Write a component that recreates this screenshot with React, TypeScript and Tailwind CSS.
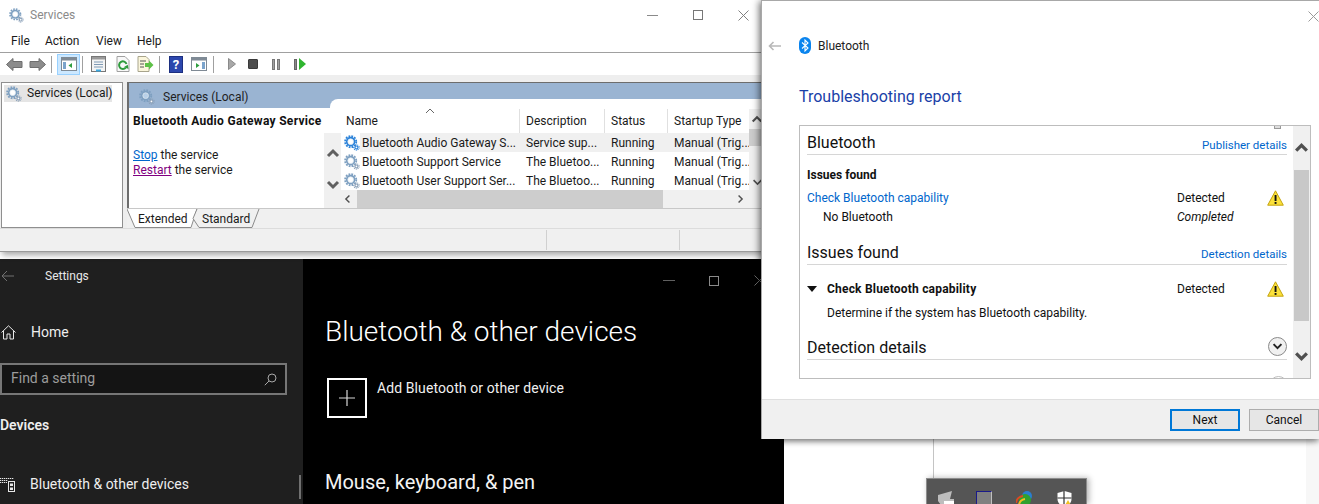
import React from "react";

function Gear({ size = 18, ring = "#7d9fc0", small = "#8aa0b8", hub = "#ffffff" }: { size?: number; ring?: string; small?: string; hub?: string }) {
  return (
    <svg width={size} height={size} viewBox="0 0 18 18" className="shrink-0">
      <circle cx="7.5" cy="7.5" r="5.4" fill={ring} />
      <circle cx="7.5" cy="7.5" r="6.3" fill="none" stroke={ring} strokeWidth="2" strokeDasharray="2 1.3" />
      <circle cx="7.5" cy="7.5" r="3.2" fill={hub} />
      <circle cx="7.5" cy="7.5" r="3.2" fill="none" stroke="#dfe8f0" strokeWidth="0.8" />
      <circle cx="14" cy="14" r="2.2" fill={small} />
      <circle cx="14" cy="14" r="3" fill="none" stroke={small} strokeWidth="1.2" strokeDasharray="1.2 0.9" />
      <circle cx="14" cy="14" r="1" fill="#fff" />
    </svg>
  );
}

function Chev({ dir, size = 14, color = "#606060", sw = 3 }: { dir: "up" | "down" | "left" | "right"; size?: number; color?: string; sw?: number }) {
  const d = { up: "M2 10 L7 5 L12 10", down: "M2 4 L7 9 L12 4", left: "M9 2 L4 7 L9 12", right: "M5 2 L10 7 L5 12" }[dir];
  return (
    <svg width={size} height={size} viewBox="0 0 14 14" className="shrink-0">
      <path d={d} fill="none" stroke={color} strokeWidth={sw} />
    </svg>
  );
}

function Warn() {
  return (
    <svg width="17" height="16" viewBox="0 0 17 16" className="shrink-0">
      <path d="M8.5 0.8 L16.3 15.2 L0.7 15.2 Z" fill="#fbe13a" stroke="#c4a30e" strokeWidth="1" strokeLinejoin="round" />
      <rect x="7.6" y="5" width="1.9" height="6" fill="#111" />
      <rect x="7.6" y="12" width="1.9" height="1.9" fill="#111" />
    </svg>
  );
}

function Sep({ ml }: { ml: string }) {
  return <div className={`w-px h-[17px] bg-[#a0a0a0] shrink-0 ${ml}`} />;
}

function ServicesToolbar() {
  return (
    <div className="h-[22px] flex items-center bg-white shrink-0">
      <svg width="17" height="15" viewBox="0 0 17 14" className="ml-[6px] shrink-0">
        <path d="M0.5 7 L7 1 V4 H16 V10 H7 V13 Z" fill="#8c8c8c" stroke="#6e6e6e" />
      </svg>
      <svg width="17" height="15" viewBox="0 0 17 14" className="ml-[6px] shrink-0">
        <path d="M16.5 7 L10 1 V4 H1 V10 H10 V13 Z" fill="#8c8c8c" stroke="#6e6e6e" />
      </svg>
      <Sep ml="ml-[5px]" />
      <div className="ml-[5px] w-[23px] h-[21px] bg-[#cce8ff] border border-[#99d1ff] flex items-center justify-center shrink-0">
        <svg width="16" height="14" viewBox="0 0 16 14">
          <rect x="0.5" y="0.5" width="15" height="13" fill="#fff" stroke="#7f8a95" />
          <rect x="0.5" y="0.5" width="15" height="3" fill="#7f8a95" />
          <rect x="2" y="5" width="3" height="7" fill="#7ba4cc" />
          <path d="M11 6 L7.5 8.5 L11 11 Z" fill="#2f9e3f" />
        </svg>
      </div>
      <Sep ml="ml-[2px]" />
      <svg width="15" height="16" viewBox="0 0 15 16" className="ml-[8px] shrink-0">
        <rect x="0.5" y="0.5" width="14" height="15" fill="#f4f4f4" stroke="#777" />
        <rect x="1" y="1" width="13" height="2.5" fill="#9a9a9a" />
        <path d="M3 6 H12 M3 8.5 H12 M3 11 H12" stroke="#7f9ab5" />
        <rect x="5" y="13.5" width="5" height="2" fill="#39a7e0" />
      </svg>
      <svg width="14" height="16" viewBox="0 0 14 16" className="ml-[10px] shrink-0">
        <path d="M1 0.5 H9 L13 4.5 V15.5 H1 Z" fill="#f8f8f8" stroke="#a0a0a0" />
        <path d="M10.5 8 A3.8 3.8 0 1 0 9.8 11.6" fill="none" stroke="#2e9b3c" strokeWidth="2" />
        <path d="M8 11 L12.5 13 L11.8 8.8 Z" fill="#2e9b3c" />
      </svg>
      <svg width="17" height="16" viewBox="0 0 17 16" className="ml-[7px] shrink-0">
        <path d="M1 0.5 H9 L12 3.5 V15.5 H1 Z" fill="#fbf6dc" stroke="#a8a48c" />
        <path d="M3 5 H9 M3 8 H7 M3 11 H7" stroke="#555" />
        <path d="M8 7 H12 V4.5 L16.5 9 L12 13.5 V11 H8 Z" fill="#5ec048" />
      </svg>
      <Sep ml="ml-[5px]" />
      <div className="ml-[9px] w-[14px] h-[17px] bg-[#2c47ad] border border-[#1c2f80] flex items-center justify-center text-white text-[13px] font-bold shrink-0 leading-none">?</div>
      <svg width="16" height="14" viewBox="0 0 16 14" className="ml-[8px] shrink-0">
        <rect x="0.5" y="0.5" width="15" height="13" fill="#fff" stroke="#7f8a95" />
        <rect x="0.5" y="0.5" width="15" height="3" fill="#7f8a95" />
        <path d="M5 6 L8.5 8.5 L5 11 Z" fill="#2f9e3f" />
        <rect x="11" y="5" width="3" height="7" fill="#7ba4cc" />
      </svg>
      <Sep ml="ml-[6px]" />
      <svg width="8" height="12" viewBox="0 0 8 12" className="ml-[14px] shrink-0">
        <path d="M0.5 0.5 L7.5 6 L0.5 11.5 Z" fill="#a8a8a8" stroke="#8a8a8a" />
      </svg>
      <div className="ml-[12px] w-[10px] h-[10px] rounded-[1px] bg-[#4d4d4d] border border-[#3a3a3a] shrink-0" />
      <div className="ml-[14px] flex gap-[2px] shrink-0">
        <div className="w-[3px] h-[11px] bg-[#a0a0a0] border-[0.5px] border-[#777]" />
        <div className="w-[3px] h-[11px] bg-[#a0a0a0] border-[0.5px] border-[#777]" />
      </div>
      <div className="ml-[14px] flex items-center gap-[2px] shrink-0">
        <div className="w-[3px] h-[11px] bg-[#8a8a8a] border-[0.5px] border-[#666]" />
        <svg width="7" height="12" viewBox="0 0 7 12">
          <path d="M0 0 L7 6 L0 12 Z" fill="#2fb52f" />
        </svg>
      </div>
    </div>
  );
}

const rows = [
  ["Bluetooth Audio Gateway S...", "Service sup...", "Running", "Manual (Trig..."],
  ["Bluetooth Support Service", "The Bluetoo...", "Running", "Manual (Trig..."],
  ["Bluetooth User Support Ser...", "The Bluetoo...", "Running", "Manual (Trig..."],
];

function ServicesList() {
  return (
    <div className="flex-1 flex flex-col min-w-0 relative">
      <div className="absolute left-[6px] right-0 top-0 bottom-0 bg-white rounded-tl-[8px]" />
      <div className="relative h-[34px] pt-[10px] pl-[6px] grid grid-cols-[190px_85px_63px_1fr] shrink-0">
        <div className="pl-[16px] flex items-center border-r border-[#e0e0e0]">Name</div>
        <div className="pl-[6px] flex items-center border-r border-[#e0e0e0]">Description</div>
        <div className="pl-[6px] flex items-center border-r border-[#e0e0e0]">Status</div>
        <div className="pl-[6px] flex items-center whitespace-nowrap">Startup Type</div>
        <svg width="10" height="6" viewBox="0 0 10 6" className="absolute left-[101px] top-[9px]">
          <path d="M1 5 L5 1 L9 5" fill="none" stroke="#666" />
        </svg>
      </div>
      <div className="relative h-[57px] flex shrink-0">
        <div className="w-[17px] shrink-0 bg-[#f0f0f0] flex flex-col items-center pt-[13px]">
          <Chev dir="up" />
          <div className="mt-[18px]"><Chev dir="down" /></div>
        </div>
        <div className="flex-1 min-w-0 mr-[16px] pl-[3px]">
          {rows.map((r, i) => {
            const sel = i === 0 ? "bg-[#f0f0f0]" : "";
            return (
              <div key={r[0]} className="h-[19px] grid grid-cols-[176px_85px_63px_1fr] items-center whitespace-nowrap">
                <div className="flex items-center h-full">
                  <Gear size={16} ring={i === 0 ? "#2b82d9" : "#7d9fc0"} small={i === 0 ? "#2b82d9" : "#8aa0b8"} />
                  <span className={`pl-[2px] h-full flex items-center flex-1 ${sel}`}>{r[0]}</span>
                </div>
                <span className={`pl-[6px] h-full flex items-center ${sel}`}>{r[1]}</span>
                <span className={`pl-[6px] h-full flex items-center ${sel}`}>{r[2]}</span>
                <span className={`pl-[6px] h-full flex items-center ${sel}`}>{r[3]}</span>
              </div>
            );
          })}
        </div>
      </div>
      <div className="relative h-[18px] bg-[#f0f0f0] flex items-center shrink-0">
        <div className="w-[33px] pl-[19px] flex shrink-0"><Chev dir="left" size={10} color="#505050" sw={2} /></div>
        <div className="w-[306px] h-full bg-[#cdcdcd] shrink-0" />
        <div className="ml-auto w-[30px] flex shrink-0"><Chev dir="right" size={10} color="#505050" sw={2} /></div>
      </div>
      <div className="absolute right-0 top-[10px] bottom-[18px] w-[16px] bg-[#f0f0f0]">
        <div className="absolute top-[4px] left-0 w-full flex justify-center"><Chev dir="up" size={12} color="#505050" sw={2.5} /></div>
        <div className="absolute top-[20px] left-0 w-full h-[17px] bg-[#cdcdcd]" />
        <div className="absolute bottom-[2px] left-0 w-full flex justify-center"><Chev dir="down" size={11} color="#505050" sw={2} /></div>
      </div>
    </div>
  );
}

function ServicesWindow() {
  return (
    <div className="absolute left-0 top-0 w-[768px] h-[252px] bg-white border-r border-b border-[#9a9a9a] shadow-[2px_3px_6px_rgba(0,0,0,0.35)] flex flex-col text-[12px] text-[#1a1a1a] z-20">
      <div className="h-[30px] flex items-center pl-[9px] shrink-0">
        <Gear size={15} />
        <span className="ml-[6px] text-[#8a8a8a]">Services</span>
        <div className="ml-auto flex items-center text-[#777]">
          <div className="w-[11px] h-px bg-[#8a8a8a]" />
          <div className="ml-[35px] w-[10px] h-[10px] border border-[#777]" />
          <svg width="11" height="11" viewBox="0 0 11 11" className="ml-[35px] mr-[18px]">
            <path d="M0.5 0.5 L10.5 10.5 M10.5 0.5 L0.5 10.5" stroke="#808080" />
          </svg>
        </div>
      </div>
      <div className="h-[22px] flex items-center pl-[11px] shrink-0 border-b border-[#a0a0a0] box-content">
        <span className="w-[34px]">File</span>
        <span className="w-[51px]">Action</span>
        <span className="w-[41px]">View</span>
        <span>Help</span>
      </div>
      <ServicesToolbar />
      <div className="flex-1 bg-[#eeeeee] pt-[7px] flex min-h-0">
        <div className="ml-px w-[122px] bg-white border border-[#8f8f8f] p-[2px] h-[146px] shrink-0">
          <div className="flex items-center bg-[#e5e5e5] h-[17px] w-[108px] pl-[2px] whitespace-nowrap">
            <Gear size={16} />
            <span className="ml-[5px] -mt-[1px]">Services (Local)</span>
          </div>
        </div>
        <div className="ml-[4px] flex-1 flex flex-col mr-[2px] h-[146px] min-w-0">
          <div className="h-[126px] flex flex-col bg-white border-t border-l-2 border-[#6d6d6d] relative shrink-0">
            <div className="absolute left-0 right-0 top-0 h-[25px] bg-[#9ab4d2] flex items-center pl-[10px] pt-[2px]">
              <Gear size={16} hub="#b8d0e8" />
              <span className="ml-[8px] text-[12px] text-[#1f1f1f]">Services (Local)</span>
            </div>
            <div className="relative flex-1 flex pt-[16px] min-h-0">
              <div className="w-[195px] pl-[4px] pt-[15px] shrink-0">
                <div className="font-bold whitespace-nowrap leading-[14px] text-[#111] tracking-[0.3px]">Bluetooth Audio Gateway Service</div>
                <div className="mt-[20px] leading-[15px]">
                  <div><span className="text-[#0066cc] underline">Stop</span> the service</div>
                  <div><span className="text-[#800080] underline">Restart</span> the service</div>
                </div>
              </div>
              <ServicesList />
            </div>
          </div>
          <div className="h-[20px] relative border-t border-[#c8c8c8] shrink-0 bg-[#f0f0f0]">
            <svg width="134" height="19" viewBox="0 0 134 19" className="absolute left-0 top-0">
              <path d="M0 0 L8 18.5 H64 L70 0" fill="#fff" stroke="#8a8a8a" />
              <path d="M70 0 L66 9.5 L72 18.5 H125 L132 0" fill="#f0f0f0" stroke="#8a8a8a" />
            </svg>
            <div className="relative flex h-full items-center pl-[11px] leading-none">
              <span className="w-[64px]">Extended</span>
              <span>Standard</span>
            </div>
          </div>
        </div>
      </div>
      <div className="h-[23px] bg-[#f0f0f0] border-t border-[#dcdcdc] flex shrink-0">
        <div className="w-[546px]" />
        <div className="w-[133px] border-l border-[#d0d0d0] my-[1px]" />
        <div className="border-l border-[#d0d0d0] flex-1 my-[1px]" />
      </div>
    </div>
  );
}

function SettingsWindow() {
  return (
    <div className="absolute left-0 top-[259px] w-[784px] h-[245px] flex text-white z-10">
      <div className="w-[303px] bg-[#1f1f1f] shrink-0 relative">
        <div className="h-[34px] flex items-center">
          <svg width="14" height="12" viewBox="0 0 14 12" className="ml-[1px] shrink-0">
            <path d="M13 6 H1 M6 1 L1 6 L6 11" fill="none" stroke="#707070" />
          </svg>
          <span className="ml-[30px] text-[12px] text-[#e8e8e8]">Settings</span>
        </div>
        <div className="mt-[22px] h-[34px] flex items-center">
          <svg width="15" height="15" viewBox="0 0 15 15" className="ml-[1px] shrink-0">
            <path d="M0.5 7.5 L7.5 0.8 L14.5 7.5 M2.5 6 V14 H6 V9 H9 V14 H12.5 V6" fill="none" stroke="#e8e8e8" />
          </svg>
          <span className="ml-[15px] text-[14px] text-[#eeeeee]">Home</span>
        </div>
        <div className="mt-[14px] w-[287px] h-[32px] bg-[#141414] border-2 border-[#767676] flex items-center pl-[9px] pr-[8px]">
          <span className="text-[14px] text-[#9c9c9c] -mt-[1px]">Find a setting</span>
          <svg width="13" height="13" viewBox="0 0 13 13" className="ml-auto">
            <circle cx="8" cy="5" r="4" fill="none" stroke="#a8a8a8" />
            <path d="M5 8 L0.8 12.2" stroke="#a8a8a8" />
          </svg>
        </div>
        <div className="mt-[20px] text-[14px] font-semibold text-[#eeeeee] leading-[20px]">Devices</div>
        <div className="mt-[39px] h-[20px] flex items-center">
          <svg width="15" height="15" viewBox="0 0 15 15" className="shrink-0">
            <path d="M0 1.5 H14 M0 3.5 H8 M0 5.5 H7" stroke="#e8e8e8" strokeDasharray="1.3 0.7" />
            <rect x="8.5" y="4.5" width="6" height="10" fill="none" stroke="#e8e8e8" />
            <rect x="10" y="6.5" width="3" height="2.5" fill="#e8e8e8" />
            <rect x="10" y="10.5" width="3" height="2.5" fill="#e8e8e8" />
          </svg>
          <span className="ml-[15px] text-[14px] text-[#eeeeee] whitespace-nowrap">Bluetooth &amp; other devices</span>
        </div>
        <div className="absolute left-[299px] top-[216px] w-[2px] h-[24px] bg-[#707070]" />
      </div>
      <div className="flex-1 bg-black relative pl-[22px]">
        <div className="absolute top-[16px] left-[360px] flex items-center">
          <div className="w-[12px] h-px bg-[#606060]" />
          <div className="ml-[34px] w-[10px] h-[10px] border border-[#8a8a8a]" />
          <svg width="11" height="11" viewBox="0 0 11 11" className="ml-[35px]">
            <path d="M0.5 0.5 L10.5 10.5 M10.5 0.5 L0.5 10.5" stroke="#707070" />
          </svg>
        </div>
        <h1 className="pt-[53px] text-[28px] leading-[40px] font-light whitespace-nowrap">Bluetooth &amp; other devices</h1>
        <div className="mt-[26px] flex items-start">
          <div className="ml-[2px] w-[40px] h-[40px] border-2 border-white flex items-center justify-center shrink-0">
            <svg width="16" height="16" viewBox="0 0 16 16">
              <path d="M8 0 V16 M0 8 H16" stroke="#d8d8d8" strokeWidth="1.2" />
            </svg>
          </div>
          <span className="ml-[10px] text-[14px] leading-[20px] text-[#f0f0f0] whitespace-nowrap tracking-[0.1px]">Add Bluetooth or other device</span>
        </div>
        <h2 className="mt-[50px] text-[20px] leading-[28px] whitespace-nowrap text-[#f4f4f4]">Mouse, keyboard, &amp; pen</h2>
      </div>
    </div>
  );
}

function BluetoothWindow() {
  return (
    <div className="absolute left-[761px] top-0 w-[558px] h-[439px] bg-white border-t border-l border-[#a8a8a8] shadow-[-3px_1px_7px_rgba(0,0,0,0.3),0_2px_6px_rgba(0,0,0,0.4)] flex flex-col z-30 text-[12px] text-[#111]">
      <svg width="11" height="11" viewBox="0 0 11 11" className="absolute right-0 top-[10px]">
        <path d="M0.5 0.5 L10.5 10.5 M10.5 0.5 L0.5 10.5" stroke="#9a9a9a" />
      </svg>
      <div className="mt-[36px] h-[17px] flex items-center shrink-0">
        <svg width="13" height="10" viewBox="0 0 13 10" className="ml-[6px] shrink-0">
          <path d="M13 5 H1.5 M5.5 1 L1.5 5 L5.5 9" fill="none" stroke="#b8b8b8" strokeWidth="1.6" />
        </svg>
        <svg width="12" height="17" viewBox="0 0 12 17" className="ml-[18px] shrink-0">
          <rect width="12" height="17" rx="6" fill="#0a84ee" />
          <path d="M3 5.5 L9 11 L6 14 V3 L9 6 L3 11.5" fill="none" stroke="#fff" strokeWidth="1.1" />
        </svg>
        <span className="ml-[7px] text-[12px] text-[#222]">Bluetooth</span>
      </div>
      <div className="mt-[32px] ml-[37px] text-[16px] leading-[22px] text-[#1a3fa8] shrink-0">Troubleshooting report</div>
      <div className="mt-[17px] ml-[37px] w-[512px] h-[254px] border border-[#bdbdbd] flex shrink-0 overflow-hidden">
        <div className="flex-1 pl-[7px] pr-[6px] relative min-w-0">
          <div className="absolute right-[12px] top-0 w-[7px] h-[3px] border border-[#9a9a9a] border-t-0 bg-[#ddd]" />
          <div className="h-[28px] flex items-end justify-between border-b border-[#d6d6d6] box-content">
            <span className="text-[16px] leading-[22px]">Bluetooth</span>
            <span className="text-[#0066cc] text-[11.5px] leading-[16px] mb-px">Publisher details</span>
          </div>
          <div className="mt-[12px] font-bold leading-[16px]">Issues found</div>
          <div className="mt-[7px] h-[16px] flex items-center">
            <span className="text-[#0066cc] flex-1">Check Bluetooth capability</span>
            <span className="w-[90px]">Detected</span>
            <div className="w-[20px]"><Warn /></div>
          </div>
          <div className="mt-[3px] h-[16px] flex items-center">
            <span className="pl-[16px] flex-1">No Bluetooth</span>
            <span className="w-[110px] italic">Completed</span>
          </div>
          <div className="mt-[15px] h-[24px] flex items-end justify-between border-b border-[#d6d6d6] box-content">
            <span className="text-[16px] leading-[22px]">Issues found</span>
            <span className="text-[#0066cc] text-[11.5px] leading-[16px] mb-[2px]">Detection details</span>
          </div>
          <div className="mt-[16px] h-[16px] flex items-center">
            <svg width="10" height="6" viewBox="0 0 10 6" className="shrink-0"><path d="M0 0 H10 L5 6 Z" fill="#111" /></svg>
            <span className="ml-[10px] font-bold flex-1 tracking-[0.2px]">Check Bluetooth capability</span>
            <span className="w-[90px]">Detected</span>
            <div className="w-[20px]"><Warn /></div>
          </div>
          <div className="mt-[8px] ml-[20px] leading-[16px]">Determine if the system has Bluetooth capability.</div>
          <div className="mt-[14px] h-[24px] flex items-end justify-between border-b border-[#d6d6d6] box-content">
            <span className="text-[16px] leading-[22px]">Detection details</span>
            <div className="w-[19px] h-[19px] rounded-full border border-[#8a8a8a] bg-[#f0f0f0] flex items-center justify-center mb-[3px]">
              <Chev dir="down" size={11} color="#222" sw={2.5} />
            </div>
          </div>
          <div className="absolute right-[5px] top-[250px] w-[19px] h-[19px] rounded-full border border-[#bdbdbd]" />
        </div>
        <div className="w-[17px] bg-[#f0f0f0] shrink-0 flex flex-col items-center pt-[14px]">
          <Chev dir="up" size={15} color="#505050" sw={3} />
          <div className="mt-[15px] w-[15px] h-[151px] bg-[#c8c8c8]" />
          <div className="mt-[28px]"><Chev dir="down" size={15} color="#505050" sw={3} /></div>
        </div>
      </div>
      <div className="mt-auto h-[40px] bg-[#f0f0f0] border-t border-[#dfdfdf] flex items-center shrink-0 justify-end">
        <div className="w-[70px] h-[22px] border-2 border-[#0078d7] bg-[#e6e6e6] flex items-center justify-center text-[12px]">Next</div>
        <div className="ml-[9px] w-[70px] h-[22px] border border-[#adadad] bg-[#e6e6e6] flex items-center justify-center text-[12px]">Cancel</div>
      </div>
    </div>
  );
}

function Tray() {
  return (
    <div className="absolute left-[926px] top-[478px] w-[161px] h-[26px] bg-[#555555] border-t border-x border-[#8c8c8c] shadow-[2px_0_6px_rgba(0,0,0,0.3)] flex pt-[12px] z-10 overflow-hidden">
      <svg width="16" height="18" viewBox="0 0 16 18" className="ml-[11px] shrink-0">
        <path d="M0 4 L14 0 L12 8 L16 8 V18 H6 L0 10 Z" fill="#bdbdbd" />
        <path d="M6 18 V10 H16 V18 Z" fill="#fff" />
      </svg>
      <div className="ml-[22px] w-[16px] h-[16px] bg-[#808080] border border-[#1a1a8a] border-b-[#c0c0c0] border-r-[#c0c0c0] shrink-0" />
      <svg width="17" height="16" viewBox="0 0 17 16" className="ml-[24px] shrink-0">
        <circle cx="11" cy="5" r="5" fill="#2a7fd0" />
        <circle cx="9" cy="9" r="6" fill="#2fa02f" />
        <path d="M0 12 A8 8 0 0 1 7 5" fill="none" stroke="#e04a20" strokeWidth="2" />
        <path d="M3 14 A7 7 0 0 1 9 8" fill="none" stroke="#f0c020" strokeWidth="2" />
      </svg>
      <svg width="15" height="16" viewBox="0 0 15 16" className="ml-[24px] shrink-0">
        <path d="M7.5 0 L14.5 2 V8 C14.5 12 11 15 7.5 16 C4 15 0.5 12 0.5 8 V2 Z" fill="#fff" />
        <path d="M7 0 V16 M0.5 7 H14.5" stroke="#333" strokeWidth="1.2" />
        <path d="M11 9 L15 16 H7 Z" fill="#f0c020" />
      </svg>
    </div>
  );
}

export default function App() {
  return (
    <div className="relative w-[1319px] h-[504px] bg-white overflow-hidden font-['Roboto','Noto_Sans',sans-serif]">
      <div className="absolute left-[1306px] top-0 w-[13px] h-[504px] bg-[#f7f7f7]" />
      <div className="absolute left-[933px] top-[439px] w-px h-[39px] bg-[#c4c4c4]" />
      <SettingsWindow />
      <Tray />
      <ServicesWindow />
      <BluetoothWindow />
    </div>
  );
}
